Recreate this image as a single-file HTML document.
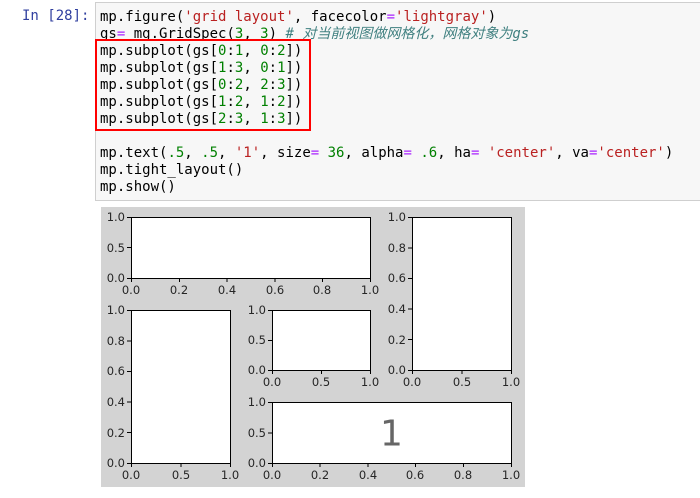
<!DOCTYPE html>
<html><head><meta charset="utf-8"><style>
body{margin:0;width:700px;height:498px;background:#fff;position:relative;overflow:hidden}
.prompt{position:absolute;left:22px;top:8px;font:14px "DejaVu Sans Mono","Liberation Mono",monospace;color:#303F9F}
.cell{position:absolute;left:95px;top:2px;width:610px;height:199px;background:#f7f7f7;border:1px solid #cfcfcf;box-sizing:border-box}
pre{position:absolute;left:100px;top:9px;margin:0;font:14px/17px "DejaVu Sans Mono","Liberation Mono","Noto Sans CJK SC",monospace;color:#000}
.s{color:#BA2121}.n{color:#008000}.o{color:#AA22FF}.c{color:#408080;font-style:italic}
.box{position:absolute;left:95px;top:39px;width:216px;height:92px;border:2px solid #f00;box-sizing:border-box}
svg{position:absolute;left:0;top:0}
</style></head><body>
<div class="cell"></div>
<div class="prompt">In [28]:</div>
<pre>mp.figure(<span class="s">'grid layout'</span>, facecolor<span class="o">=</span><span class="s">'lightgray'</span>)
gs<span class="o">=</span> mg.GridSpec(<span class="n">3</span>, <span class="n">3</span>) <span class="c"># 对当前视图做网格化，网格对象为gs</span>
mp.subplot(gs[<span class="n">0</span>:<span class="n">1</span>, <span class="n">0</span>:<span class="n">2</span>])
mp.subplot(gs[<span class="n">1</span>:<span class="n">3</span>, <span class="n">0</span>:<span class="n">1</span>])
mp.subplot(gs[<span class="n">0</span>:<span class="n">2</span>, <span class="n">2</span>:<span class="n">3</span>])
mp.subplot(gs[<span class="n">1</span>:<span class="n">2</span>, <span class="n">1</span>:<span class="n">2</span>])
mp.subplot(gs[<span class="n">2</span>:<span class="n">3</span>, <span class="n">1</span>:<span class="n">3</span>])

mp.text(<span class="n">.5</span>, <span class="n">.5</span>, <span class="s">'1'</span>, size<span class="o">=</span> <span class="n">36</span>, alpha<span class="o">=</span> <span class="n">.6</span>, ha<span class="o">=</span> <span class="s">'center'</span>, va<span class="o">=</span><span class="s">'center'</span>)
mp.tight_layout()
mp.show()</pre>
<div class="box"></div>
<svg width="700" height="498" font-family="DejaVu Sans, sans-serif" font-size="11.5" fill="#262626">
<rect x="101" y="207" width="424" height="280" fill="#d3d3d3"/>
<g fill="#fff" stroke="#000" stroke-width="1">
<rect x="131.5" y="217.5" width="239" height="61"/>
<rect x="131.5" y="310.5" width="99" height="153"/>
<rect x="412.5" y="217.5" width="99" height="153"/>
<rect x="272.5" y="310.5" width="98" height="60"/>
<rect x="272.5" y="402.5" width="239" height="61"/>
</g>
<g stroke="#000" stroke-width="1">
<path d="M131.5 278v4M179.5 278v4M227 278v4M275 278v4M322.5 278v4M370.5 278v4M131 278.5h-4M131 247.5h-4M131 217.5h-4"/>
<path d="M131.5 463v4M181 463v4M230.5 463v4M131 463.5h-4M131 432.5h-4M131 402h-4M131 371.5h-4M131 341h-4M131 310.5h-4"/>
<path d="M412.5 370v4M462 370v4M511.5 370v4M412 370.5h-4M412 339.5h-4M412 309h-4M412 278.5h-4M412 248h-4M412 217.5h-4"/>
<path d="M272.5 370v4M321.5 370v4M370.5 370v4M272 370.5h-4M272 340.5h-4M272 310.5h-4"/>
<path d="M272.5 463v4M320 463v4M368 463v4M415.5 463v4M463.5 463v4M511.5 463v4M272 463.5h-4M272 433h-4M272 402.5h-4"/>
</g>
<g text-anchor="middle">
<text x="131" y="294">0.0</text><text x="179" y="294">0.2</text><text x="227" y="294">0.4</text><text x="275" y="294">0.6</text><text x="322" y="294">0.8</text><text x="370" y="294">1.0</text>
<text x="131" y="479">0.0</text><text x="181" y="479">0.5</text><text x="230" y="479">1.0</text>
<text x="412" y="386">0.0</text><text x="462" y="386">0.5</text><text x="511" y="386">1.0</text>
<text x="272" y="386">0.0</text><text x="321" y="386">0.5</text><text x="370" y="386">1.0</text>
<text x="272" y="479">0.0</text><text x="320" y="479">0.2</text><text x="368" y="479">0.4</text><text x="415" y="479">0.6</text><text x="463" y="479">0.8</text><text x="511" y="479">1.0</text>
</g>
<g text-anchor="end">
<text x="125" y="282">0.0</text><text x="125" y="252">0.5</text><text x="125" y="221">1.0</text>
<text x="125" y="467">0.0</text><text x="125" y="437">0.2</text><text x="125" y="406">0.4</text><text x="125" y="375">0.6</text><text x="125" y="345">0.8</text><text x="125" y="314">1.0</text>
<text x="406" y="374">0.0</text><text x="406" y="344">0.2</text><text x="406" y="313">0.4</text><text x="406" y="282">0.6</text><text x="406" y="252">0.8</text><text x="406" y="221">1.0</text>
<text x="266" y="374">0.0</text><text x="266" y="344">0.5</text><text x="266" y="314">1.0</text>
<text x="266" y="467">0.0</text><text x="266" y="437">0.5</text><text x="266" y="406">1.0</text>
</g>
<text x="391.5" y="445.5" text-anchor="middle" font-size="36" fill="#000" fill-opacity="0.6">1</text>
</svg>
</body></html>
